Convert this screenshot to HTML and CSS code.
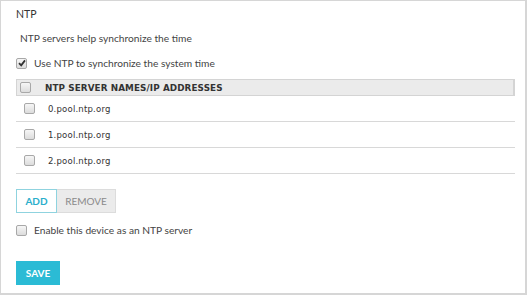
FILE: index.html
```html
<!DOCTYPE html>
<html lang="en">
<head>
  <meta charset="UTF-8">
  <title>NTP</title>
  <link rel="stylesheet" href="styles.css">
</head>
<body>
  <div class="panel">
    <div class="title">NTP</div>
    <p class="desc">NTP servers help synchronize the time</p>

    <label class="check-row">
      <span class="box checked">
        <svg width="8" height="8" viewBox="0 0 8 8"><path d="M1 4.2 L3.2 6.4 L7 1.4" fill="none" stroke="#333" stroke-width="1.8"/></svg>
      </span>
      Use NTP to synchronize the system time
    </label>

    <div class="server-table">
      <div class="thead">
        <span class="box"></span>
        <span class="th-label">NTP SERVER NAMES/IP ADDRESSES</span>
      </div>
      <div class="row"><span class="box"></span><span class="host">0.pool.ntp.org</span></div>
      <div class="row"><span class="box"></span><span class="host">1.pool.ntp.org</span></div>
      <div class="row"><span class="box"></span><span class="host">2.pool.ntp.org</span></div>
    </div>

    <div class="btn-group">
      <button class="btn-add">ADD</button>
      <button class="btn-remove">REMOVE</button>
    </div>

    <label class="check-row server-opt">
      <span class="box"></span>
      Enable this device as an NTP server
    </label>

    <button class="btn-save">SAVE</button>
  </div>
</body>
</html>
```

FILE: styles.css
```css
body {
  margin: 0;
  font-family: Lato, "Open Sans", sans-serif;
  color: #444;
}
.panel {
  width: 527px;
  height: 295px;
  box-sizing: border-box;
  border: 1px solid #d6d6d6;
  border-right-width: 2px;
  border-bottom-width: 2px;
  padding: 6px 0 0 15px;
  font-size: 10.2px;
}
.title {
  font-size: 10.5px;
  line-height: 14px;
  color: #333;
}
.desc {
  margin: 10px 0 0 4px;
  line-height: 14px;
}
.check-row {
  display: flex;
  align-items: center;
  gap: 7px;
  margin-top: 11px;
  line-height: 14px;
}
.box {
  display: inline-flex;
  align-items: center;
  justify-content: center;
  width: 9px;
  height: 9px;
  border: 1px solid #a8a8a8;
  border-radius: 2px;
  background: linear-gradient(#f6f6f6, #dcdcdc);
  flex: none;
}
.server-table {
  width: 499px;
  margin-top: 9px;
  font-family: "DejaVu Sans", Verdana, sans-serif;
  font-size: 8.5px;
  color: #333;
}
.thead {
  display: flex;
  align-items: center;
  height: 15px;
  background: #ebebeb;
  border: 1px solid #d4d4d4;
  border-right-width: 2px;
  padding-left: 3px;
}
.th-label {
  font-weight: bold;
  font-size: 8.8px;
  margin-left: 14px;
  letter-spacing: 0.1px;
}
.row {
  display: flex;
  align-items: center;
  height: 25px;
  border-bottom: 1px solid #d8d8d8;
  padding-left: 8px;
}
.host {
  margin-left: 13px;
  letter-spacing: 0.2px;
}
.btn-group {
  display: flex;
  margin-top: 15px;
}
.btn-group button {
  height: 24px;
  font-family: Lato, "Open Sans", sans-serif;
  font-size: 10px;
  padding: 0;
  cursor: pointer;
}
.btn-add {
  width: 41px;
  background: #fff;
  border: 1px solid #8fd3df;
  color: #2aaecb;
  font-weight: bold;
}
.btn-remove {
  width: 59px;
  background: #ebebeb;
  border: 1px solid #dcdcdc;
  border-left: none;
  color: #8a8a8a;
}
.server-opt {
  margin-top: 10px;
}
.btn-save {
  display: block;
  margin-top: 24px;
  width: 44px;
  height: 24px;
  border: none;
  background: #2bbbd5;
  color: #fff;
  font-family: Lato, "Open Sans", sans-serif;
  font-weight: bold;
  font-size: 10px;
  padding: 0;
}
```
